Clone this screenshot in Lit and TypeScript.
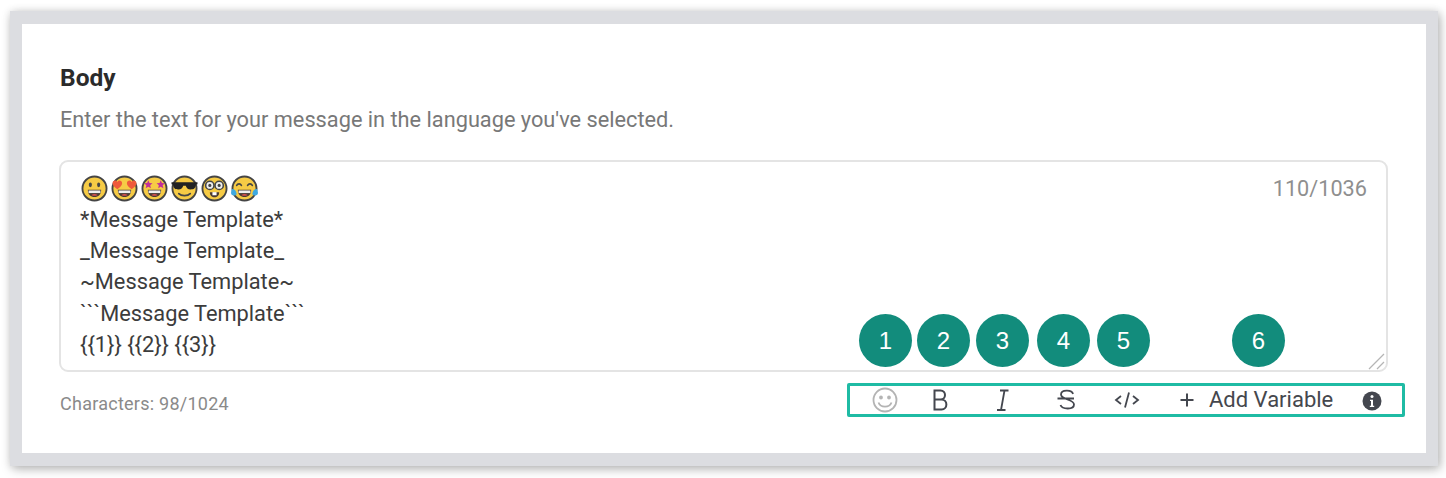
import { LitElement, html, css, svg } from "lit";
import { customElement } from "lit/decorators.js";

const face = (inner: unknown) => html`<svg class="emoji" viewBox="0 0 26 26" aria-hidden="true">
  <circle cx="13" cy="13" r="11.6" fill="#f6cb45" stroke="#454545" stroke-width="1.800"></circle>${inner}</svg>`;

const grin = svg`<path d="M6.600 14.200h12.800c0 4.600-2.800 7-6.400 7s-6.400-2.400-6.400-7z" fill="#4a3a35"/><path d="M7.300 14.900h11.400v2.500H7.300z" fill="#eee"/><path d="M10 19.200c1.700-1.300 4.300-1.300 6 0-1.700 1.200-4.300 1.200-6 0z" fill="#d9534f"/>`;
const heart = (x: number) => svg`<path transform="translate(${x} 5) scale(1.150)" d="M4 7.500C1 5.400 0 3.900 0 2.500 0 .4 2.800-.7 4 1.500 5.200-.7 8 .4 8 2.500c0 1.400-1 2.900-4 5z" fill="#ef5a3c"/>`;
const star = (x: number) => svg`<path transform="translate(${x} 5) scale(1.150)" d="M3.500 0l1 2.400 2.500.2-1.900 1.600.6 2.500-2.200-1.300-2.200 1.300.6-2.500L0 2.600l2.500-.2z" fill="#c2309a"/>`;

const emojis = [
  face(svg`<ellipse cx="9" cy="9.500" rx="1.500" ry="2.300" fill="#454545"/><ellipse cx="17" cy="9.500" rx="1.500" ry="2.300" fill="#454545"/>${grin}`),
  face(svg`${heart(1.500)}${heart(15.300)}${grin}`),
  face(svg`${star(3)}${star(15)}${grin}`),
  face(svg`<path d="M0.500 7h25v2l-1.500.5c-.5 3.500-2 4.500-5 4.500s-4-1.500-4.800-3.700h-2.400C11 12.500 10 14 7 14S2.500 13 2 9.500L.5 9z" fill="#222"/><path d="M7.500 18c2.500 2.500 8.500 2.500 11 0" fill="none" stroke="#454545" stroke-width="1.700" stroke-linecap="round"/>`),
  face(svg`<circle cx="8.500" cy="10" r="4" fill="#eee" stroke="#454545" stroke-width="1.500"/><circle cx="17.500" cy="10" r="4" fill="#eee" stroke="#454545" stroke-width="1.500"/><circle cx="8.500" cy="10" r="1.500" fill="#454545"/><circle cx="17.500" cy="10" r="1.500" fill="#454545"/><path d="M8.500 16.500h9c0 3-2 5-4.500 5s-4.500-2-4.500-5z" fill="#4a3a35"/><path d="M11 16.500h4v3h-4z" fill="#fff"/>`),
  face(svg`<path d="M5.500 10c1-2 3.500-2 4.500 0M16 10c1-2 3.500-2 4.500 0" fill="none" stroke="#454545" stroke-width="1.600" stroke-linecap="round"/>${grin}<path d="M1 13.500c2.500 0 4 1.500 4.500 5-1.200 2-5.500 1.500-5.500-1.200 0-1.300.5-2.500 1-3.800zM25 13.500c-2.500 0-4 1.500-4.500 5 1.200 2 5.500 1.500 5.500-1.200 0-1.300-.5-2.500-1-3.800z" fill="#3fa9e0"/>`),
];

const LINES = ["*Message Template*", "_Message Template_", "~Message Template~", "```Message Template```", "{{1}} {{2}} {{3}}"];

@customElement("app-root")
export class AppRoot extends LitElement {
  static styles = css`
    :host {
      display: block;
      width: 1446px;
      height: 478px;
      overflow: hidden;
      background: #fff;
      font-family: Roboto, "Liberation Sans", sans-serif;
      box-sizing: border-box;
      padding: 11px 8px 12px 10px;
    }
    .frame {
      box-sizing: border-box;
      height: 455px;
      border: solid #dcdde1;
      border-width: 13px 12px 13px 12px;
      box-shadow: 2px 3px 10px rgba(0, 0, 0, 0.28), 0 0 8px rgba(0, 0, 0, 0.08);
      background: #fff;
      padding: 39px 21px 0 38px;
      display: flex;
      flex-direction: column;
    }
    h2 {
      margin: 0;
      font-size: 24.500px;
      line-height: 30px;
      font-weight: 700;
      color: #2b2b2b;
    }
    .sub {
      margin: 12px 0 0;
      font-size: 21.750px;
      line-height: 30px;
      color: #787878;
    }
    .box {
      position: relative;
      box-sizing: border-box;
      margin: 25px 17px 0 -1px;
      height: 212px;
      border: 2px solid #e4e4e4;
      border-radius: 9px;
      padding: 11px 0 0 19px;
      font-size: 21.800px;
      line-height: 31.200px;
      color: #3c3c3c;
    }
    .emojis {
      display: flex;
      gap: 3px;
      height: 31px;
      align-items: center;
      margin-left: 0.500px;
    }
    .emoji {
      width: 27px;
      height: 27px;
      display: block;
    }
    .count {
      position: absolute;
      top: 12px;
      right: 19px;
      font-size: 21.700px;
      line-height: 30px;
      color: #8f8f8f;
    }
    .grip {
      position: absolute;
      right: 0;
      bottom: 0;
      width: 20px;
      height: 20px;
    }
    .badges {
      position: absolute;
      left: 798px;
      top: 152px;
      display: flex;
    }
    .badge {
      width: 53px;
      height: 53px;
      border-radius: 50%;
      background: #128c7c;
      color: #fff;
      font-family: "Liberation Sans", sans-serif;
      font-size: 24px;
      display: flex;
      align-items: center;
      justify-content: center;
      margin-right: 5px;
    }
    .badge.b2 { margin-right: 6px; }
    .badge.b3 { margin-right: 8px; }
    .badge.b4 { margin-right: 7px; }
    .badge.b5 { margin-right: 82px; }
    .foot {
      display: flex;
      align-items: flex-start;
      justify-content: space-between;
      margin-top: 11px;
    }
    .chars {
      font-size: 18px;
      line-height: 22px;
      color: #8a8a8a;
      margin-top: 10px;
      letter-spacing: 0.250px;
    }
    .toolbar {
      box-sizing: border-box;
      width: 558px;
      height: 34px;
      border: 3px solid #1fbba4;
      border-radius: 2px;
      display: flex;
      align-items: center;
      padding-left: 22px;
      color: #44474f;
    }
    .ic {
      width: 26px;
      height: 26px;
      display: block;
      flex: none;
      fill: none;
      stroke: #44474f;
      stroke-width: 1.800;
    }
    .i2 { margin-left: 29px; }
    .i3, .i4 { margin-left: 37px; }
    .i5 { margin-left: 35px; }
    .i6 { margin-left: 34px; }
    .label {
      margin-left: 9px;
      font-size: 22px;
      line-height: 28px;
      color: #45474d;
      white-space: nowrap;
    }
    .info { margin-left: 28px; width: 22px; height: 22px; margin-top: 2px; }
    .smile { stroke: #b4b4b4; }
    .smile circle.e { fill: #b4b4b4; }
  `;

  render() {
    return html`<div class="frame">
      <h2>Body</h2>
      <p class="sub">Enter the text for your message in the language you've selected.</p>
      <div class="box">
        <div class="emojis">${emojis}</div>
        ${LINES.map((l) => html`<div>${l}</div>`)}
        <div class="count">110/1036</div>
        <svg class="grip" viewBox="0 0 20 20" aria-hidden="true">
          <path d="M3 19L18 4M11 19l7-7" stroke="#b5b5b5" stroke-width="1.300" fill="none"></path>
        </svg>
        <div class="badges">
          ${[1, 2, 3, 4, 5, 6].map((n) => html`<div class="badge b${n}">${n}</div>`)}
        </div>
      </div>
      <div class="foot">
        <div class="chars">Characters: 98/1024</div>
        <div class="toolbar">
          <svg class="ic smile" viewBox="0 0 26 26" aria-hidden="true">
            <circle cx="13" cy="13" r="11.500"></circle><circle class="e" cx="9" cy="10.500" r="1"></circle><circle class="e" cx="17" cy="10.500" r="1"></circle>
            <path d="M6.500 15.500c2 5.500 11 5.500 13 0"></path>
          </svg>
          <svg class="ic i2" viewBox="0 0 26 26" aria-hidden="true">
            <path d="M7.500 3.500h6c6 0 6 9 0 9h-6zM7.500 12.500h7c6.500 0 6.500 10 0 10h-7z" stroke-width="2"></path>
          </svg>
          <svg class="ic i3" viewBox="0 0 26 26" aria-hidden="true">
            <path d="M10 3.500h8.500M7 23h8.500M14.500 3.500L11 23"></path>
          </svg>
          <svg class="ic i4" viewBox="0 0 26 26" aria-hidden="true">
            <path d="M20 7c-1-4.500-12-4.500-12 .5 0 5.500 13 4.500 13 10 0 5.500-12 5-13.500 .5M4.500 11.500h16.500"></path>
          </svg>
          <svg class="ic i5" viewBox="0 0 26 26" aria-hidden="true">
            <path d="M7 9l-5 4 5 4M19 9l5 4-5 4M15 5.500L11 20.500"></path>
          </svg>
          <svg class="ic i6" viewBox="0 0 26 26" aria-hidden="true">
            <path d="M13 6.500v13M6.500 13h13" stroke-width="2"></path>
          </svg>
          <span class="label">Add Variable</span>
          <svg class="ic info" viewBox="0 0 22 22" aria-hidden="true">
            <circle cx="11" cy="11" r="9.500" fill="#44474f" stroke="none"></circle>
            <circle cx="11" cy="6.500" r="1.500" fill="#fff" stroke="none"></circle>
            <path d="M9 9.800h3v6h1.200v1.300H8.800v-1.300H10V11H9z" fill="#fff" stroke="none"></path>
          </svg>
        </div>
      </div>
    </div>`;
  }
}
